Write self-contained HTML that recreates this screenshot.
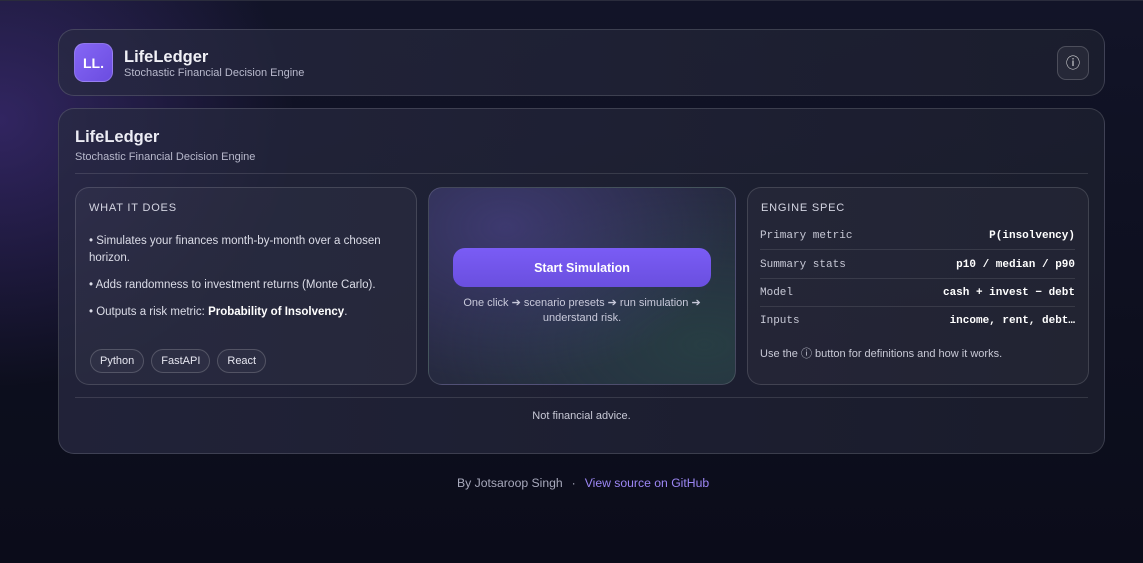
<!DOCTYPE html>
<html><head><meta charset="utf-8"><style>
*{box-sizing:border-box;margin:0;padding:0}
body{width:1143px;height:563px;overflow:hidden;font-family:"Liberation Sans",sans-serif;color:#e6e6f0;
background:radial-gradient(ellipse 420px 380px at 0px 120px,rgba(90,60,170,.45),transparent 70%),linear-gradient(180deg,#121428 0%,#0d0f1e 60%,#0b0c1a 100%);position:relative}
.topline{position:absolute;left:0;top:0;width:1143px;height:1px;background:#2a2c3c}
.card{position:absolute;left:58px;width:1047px;border:1px solid rgba(255,255,255,.14);border-radius:16px;background:linear-gradient(90deg,rgba(40,42,66,.75),rgba(30,33,48,.75))}
.hdr{top:29px;height:67px}
.logo{position:absolute;left:15px;top:13px;width:39px;height:39px;border-radius:10px;background:linear-gradient(135deg,#8566f5,#6b4de0);color:#fff;font-weight:bold;font-size:14px;display:flex;align-items:center;justify-content:center;border:1px solid rgba(255,255,255,.2)}
.t1{position:absolute;left:65px;top:18px;font-size:16.5px;font-weight:bold;color:#f0f0f6}
.t2{position:absolute;left:65px;top:37px;font-size:11px;color:#b8b9cc}
.ib{position:absolute;right:15px;top:16px;width:32px;height:34px;border-radius:9px;border:1px solid rgba(255,255,255,.18);background:rgba(255,255,255,.05);display:flex;align-items:center;justify-content:center;font-size:14px;color:#eee}
.main{top:108px;height:346px}
.sub{position:absolute;border:1px solid rgba(255,255,255,.14);border-radius:14px;top:78px;height:198px;background:rgba(255,255,255,.035)}
.lbl{font-size:11px;letter-spacing:.8px;color:#d4d5e2;position:absolute;left:13px;top:14px}
.li{position:absolute;left:13px;font-size:11.5px;color:#dcdde8;line-height:17px;width:320px}
.tag{display:inline-block;border:1px solid rgba(255,255,255,.18);border-radius:12px;padding:0 9px;height:24px;line-height:22px;font-size:11px;margin-right:7px;background:rgba(255,255,255,.03)}
.row{position:absolute;left:12px;right:13px;height:28px;font-family:"Liberation Mono",monospace;font-size:11px;color:#c8c9d6;display:flex;justify-content:space-between;align-items:center;border-bottom:1px solid rgba(255,255,255,.1)}
.row b{color:#fff}
</style></head><body>
<div class="topline"></div>
<div class="card hdr"><div class="logo">LL.</div><div class="t1">LifeLedger</div><div class="t2">Stochastic Financial Decision Engine</div><div class="ib">ⓘ</div></div>
<div class="card main">
<div style="position:absolute;left:16px;top:19px;font-size:16.5px;font-weight:bold;color:#ececf4">LifeLedger</div>
<div style="position:absolute;left:16px;top:42px;font-size:11px;color:#b8b9cc">Stochastic Financial Decision Engine</div>
<div style="position:absolute;left:16px;right:16px;top:64px;height:1px;background:rgba(255,255,255,.12)"></div>
<div class="sub" style="left:16px;width:342px">
<div class="lbl">WHAT IT DOES</div>
<div class="li" style="top:45px">• Simulates your finances month-by-month over a chosen horizon.</div>
<div class="li" style="top:89px">• Adds randomness to investment returns (Monte Carlo).</div>
<div class="li" style="top:116px">• Outputs a risk metric: <b style="color:#fff">Probability of Insolvency</b>.</div>
<div style="position:absolute;left:14px;top:161px"><span class="tag">Python</span><span class="tag">FastAPI</span><span class="tag">React</span></div>
</div>
<div class="sub" style="left:369px;width:308px;background:radial-gradient(ellipse at 25% 20%,rgba(80,70,150,.55),transparent 70%),radial-gradient(ellipse at 90% 80%,rgba(40,80,70,.5),transparent 70%),#262a40">
<div style="position:absolute;left:24px;top:60px;width:258px;height:39px;border-radius:12px;background:linear-gradient(180deg,#7a5cf5,#6a4fdf);color:#fff;font-weight:bold;font-size:12.5px;display:flex;align-items:center;justify-content:center">Start Simulation</div>
<div style="position:absolute;left:10px;right:10px;top:108px;text-align:center;font-size:11px;line-height:15px;color:#c8c9da">One click ➔ scenario presets ➔ run simulation ➔ understand risk.</div>
</div>
<div class="sub" style="left:688px;width:342px">
<div class="lbl">ENGINE SPEC</div>
<div class="row" style="top:34px"><span>Primary metric</span><b>P(insolvency)</b></div>
<div class="row" style="top:63px"><span>Summary stats</span><b>p10 / median / p90</b></div>
<div class="row" style="top:91px"><span>Model</span><b>cash + invest − debt</b></div>
<div class="row" style="top:119px;border:none"><span>Inputs</span><b>income, rent, debt…</b></div>
<div style="position:absolute;left:12px;top:157px;font-size:11px;color:#c8c9d6">Use the ⓘ button for definitions and how it works.</div>
</div>
<div style="position:absolute;left:16px;right:16px;top:288px;height:1px;background:rgba(255,255,255,.12)"></div>
<div style="position:absolute;left:0;right:0;top:301px;text-align:center;font-size:11px;color:#c8c9d6">Not financial advice.</div>
</div>
<div style="position:absolute;left:457px;top:476px;font-size:12.2px;color:#a8a9bc;white-space:nowrap">By Jotsaroop Singh<span style="display:inline-block;width:22px;text-align:center">·</span><span style="color:#9d87f5">View source on GitHub</span></div>
</body></html>
